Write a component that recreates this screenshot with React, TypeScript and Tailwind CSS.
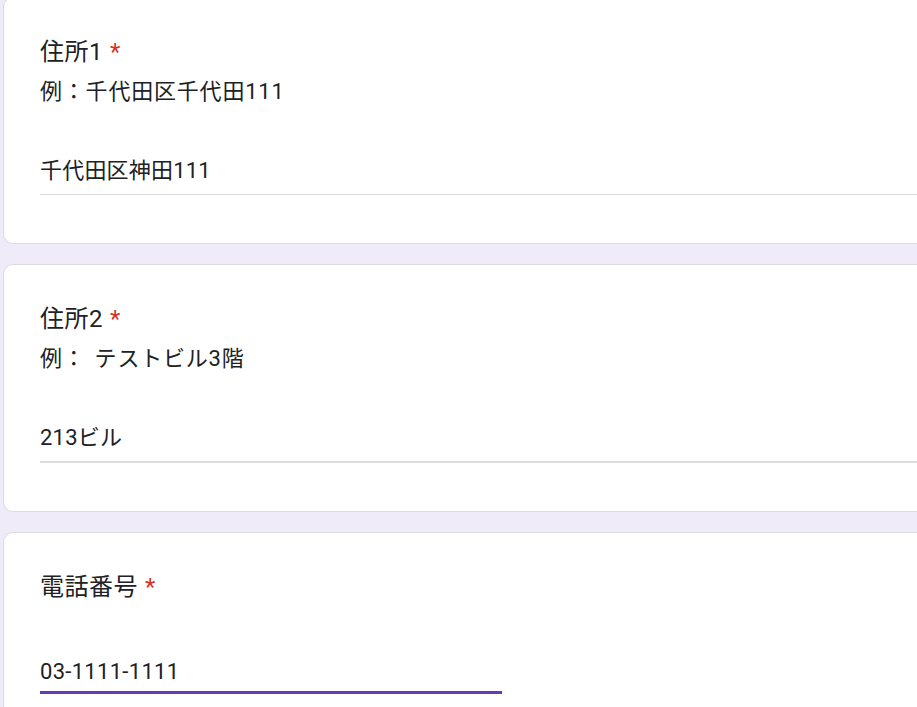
import React from "react";

const font = { fontFamily: "Roboto, 'Noto Sans CJK JP', sans-serif" };

function Title({ children }: { children: React.ReactNode }) {
  return (
    <div className="text-[24px] leading-[32px] text-[#202124] tracking-[0.5px]">
      {children}
      <span className="ml-[7px] text-[#d93025]">*</span>
    </div>
  );
}

export default function App() {
  return (
    <div
      className="w-[917px] h-[707px] overflow-hidden bg-[#f0ebf8] pl-[3px]"
      style={font}
    >
      <div className="w-[1000px] flex flex-col gap-[20px] mt-[-3px]">
        {/* Card 1 */}
        <div className="bg-white border border-[#dadce0] rounded-[10px] pl-[36px] pt-[38px] pb-[48px]">
          <Title>住所1</Title>
          <div className="mt-[8px] text-[22px] leading-[32px] text-[#202124] tracking-[0.8px]">
            例：千代田区千代田111
          </div>
          <div className="mt-[47px] text-[22px] leading-[32px] text-[#202124] tracking-[0.2px]">
            千代田区神田111
          </div>
          <div className="mt-[7px] h-[1px] bg-[#dadce0]" />
        </div>

        {/* Card 2 */}
        <div className="bg-white border border-[#dadce0] rounded-[10px] pl-[36px] pt-[38px] pb-[48px]">
          <Title>住所2</Title>
          <div className="mt-[8px] text-[22px] leading-[32px] text-[#202124] tracking-[0.8px]">
            例：<span className="ml-[9px]">テストビル3階</span>
          </div>
          <div className="mt-[47px] text-[22px] leading-[32px] text-[#202124] tracking-[0.2px]">
            213ビル
          </div>
          <div className="mt-[7px] h-[2px] bg-[#dadce0]" />
        </div>

        {/* Card 3 */}
        <div className="bg-white border border-[#dadce0] rounded-[10px] pl-[36px] pt-[38px] pb-[48px]">
          <Title>電話番号</Title>
          <div className="mt-[53px] text-[22px] leading-[32px] text-[#202124] tracking-[0.3px]">
            03-1111-1111
          </div>
          <div className="mt-[3px] h-[3px] w-[462px] bg-[#673ab7]" />
        </div>
      </div>
    </div>
  );
}
